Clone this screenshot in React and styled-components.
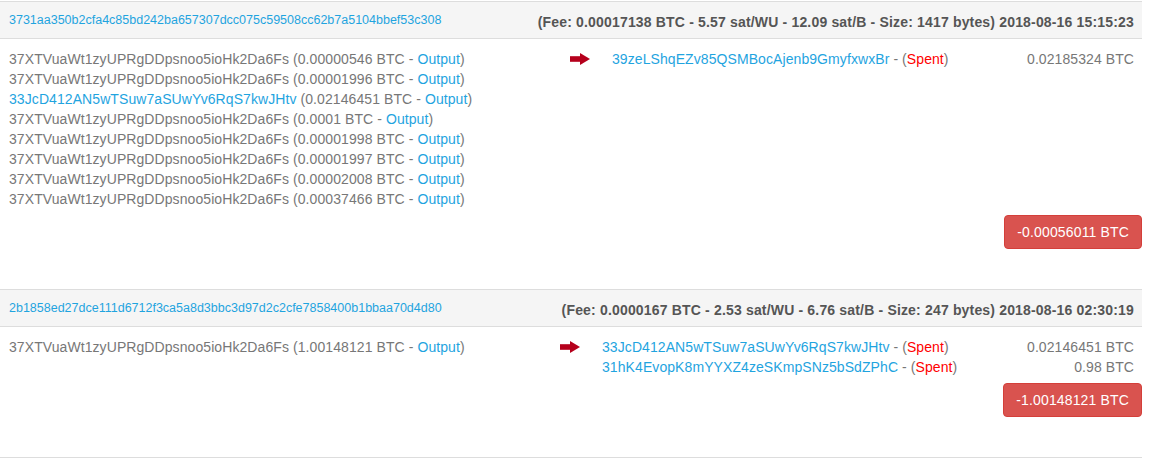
import React from "react";
import styled, { createGlobalStyle } from "styled-components";

const GlobalStyle = createGlobalStyle`
  html, body {
    margin: 0;
    padding: 0;
    background: #fff;
  }
  body {
    font-family: "Liberation Sans", Arial, Helvetica, sans-serif;
    font-size: 14px;
    line-height: 20px;
    letter-spacing: 0.08px;
    color: #777;
  }
`;

const Page = styled.div`
  width: 1142px;
  padding-top: 1px;
`;

const Tx = styled.section`
  border-top: 1px solid #ddd;
  padding-bottom: 40px;

  &:last-child {
    border-bottom: 1px solid #ddd;
  }
`;

const TxHeader = styled.div`
  display: flex;
  justify-content: space-between;
  align-items: flex-start;
  height: 36px;
  padding: 0 8px 0 9px;
  background: #f5f5f5;
  border-bottom: 1px solid #ddd;
`;

const HashLink = styled.a`
  margin-top: 8px;
  font-size: 12.5px;
  line-height: 20px;
  letter-spacing: 0;
  color: #1fa4df;
  text-decoration: none;
`;

const FeeInfo = styled.span`
  margin-top: 10px;
  font-size: 14px;
  line-height: 20px;
  font-weight: bold;
  letter-spacing: 0.17px;
  color: #555;
`;

const TxBody = styled.div`
  display: grid;
  grid-template-columns: ${(p) => p.$inputsWidth}px 42px 1fr;
  padding: 10px 8px 0 9px;
`;

const InputList = styled.div`
  display: flex;
  flex-direction: column;
`;

const Line = styled.div`
  line-height: 20px;
  white-space: nowrap;
`;

const Addr = styled.a`
  color: ${(p) => (p.$self ? "#777" : "#1fa4df")};
  text-decoration: none;
`;

const Link = styled.a`
  color: #1fa4df;
  text-decoration: none;
`;

const Spent = styled.span`
  color: #f00;
`;

const ArrowCell = styled.div`
  height: 20px;
  display: flex;
  align-items: center;
`;

const OutputList = styled.div`
  display: flex;
  flex-direction: column;
`;

const OutputRow = styled.div`
  display: flex;
  justify-content: space-between;
  line-height: 20px;
  white-space: nowrap;
`;

const Amount = styled.span`
  color: #777;
`;

const ButtonRow = styled.div`
  display: flex;
  justify-content: flex-end;
  margin-top: 6px;
`;

const ResultButton = styled.button`
  font-family: inherit;
  font-size: 14px;
  line-height: 20px;
  letter-spacing: 0.15px;
  padding: 6px 12px;
  color: #fff;
  background: #d9534f;
  border: 1px solid #d43f3a;
  border-radius: 4px;
  cursor: pointer;
`;

const RedArrow = () => (
  <svg width="20" height="12" viewBox="0 0 20 12" aria-hidden="true">
    <rect x="0" y="3.2" width="11" height="5.6" fill="#b5001c" />
    <polygon points="10,0 20,6 10,12" fill="#b5001c" />
  </svg>
);

const SELF = "37XTVuaWt1zyUPRgDDpsnoo5ioHk2Da6Fs";

const txs = [
  {
    hash: "3731aa350b2cfa4c85bd242ba657307dcc075c59508cc62b7a5104bbef53c308",
    fee: "(Fee: 0.00017138 BTC - 5.57 sat/WU - 12.09 sat/B - Size: 1417 bytes) 2018-08-16 15:15:23",
    inputsWidth: 561,
    inputs: [
      [SELF, "0.00000546"],
      [SELF, "0.00001996"],
      ["33JcD412AN5wTSuw7aSUwYv6RqS7kwJHtv", "0.02146451"],
      [SELF, "0.0001"],
      [SELF, "0.00001998"],
      [SELF, "0.00001997"],
      [SELF, "0.00002008"],
      [SELF, "0.00037466"],
    ],
    outputs: [["39zeLShqEZv85QSMBocAjenb9GmyfxwxBr", "0.02185324 BTC"]],
    result: "-0.00056011 BTC",
  },
  {
    hash: "2b1858ed27dce111d6712f3ca5a8d3bbc3d97d2c2cfe7858400b1bbaa70d4d80",
    fee: "(Fee: 0.0000167 BTC - 2.53 sat/WU - 6.76 sat/B - Size: 247 bytes) 2018-08-16 02:30:19",
    inputsWidth: 551,
    inputs: [[SELF, "1.00148121"]],
    outputs: [
      ["33JcD412AN5wTSuw7aSUwYv6RqS7kwJHtv", "0.02146451 BTC"],
      ["31hK4EvopK8mYYXZ4zeSKmpSNz5bSdZPhC", "0.98 BTC"],
    ],
    result: "-1.00148121 BTC",
  },
];

export default function App() {
  return (
    <>
      <GlobalStyle />
      <Page>
        {txs.map((tx) => (
          <Tx key={tx.hash}>
            <TxHeader>
              <HashLink href="#">{tx.hash}</HashLink>
              <FeeInfo>{tx.fee}</FeeInfo>
            </TxHeader>
            <TxBody $inputsWidth={tx.inputsWidth}>
              <InputList>
                {tx.inputs.map(([addr, amt], i) => (
                  <Line key={i}>
                    <Addr href="#" $self={addr === SELF}>
                      {addr}
                    </Addr>{" "}
                    ({amt} BTC - <Link href="#">Output</Link>)
                  </Line>
                ))}
              </InputList>
              <ArrowCell>
                <RedArrow />
              </ArrowCell>
              <OutputList>
                {tx.outputs.map(([addr, amt], i) => (
                  <OutputRow key={i}>
                    <span>
                      <Link href="#">{addr}</Link> - (<Spent>Spent</Spent>)
                    </span>
                    <Amount>{amt}</Amount>
                  </OutputRow>
                ))}
              </OutputList>
            </TxBody>
            <ButtonRow>
              <ResultButton>{tx.result}</ResultButton>
            </ButtonRow>
          </Tx>
        ))}
      </Page>
    </>
  );
}
